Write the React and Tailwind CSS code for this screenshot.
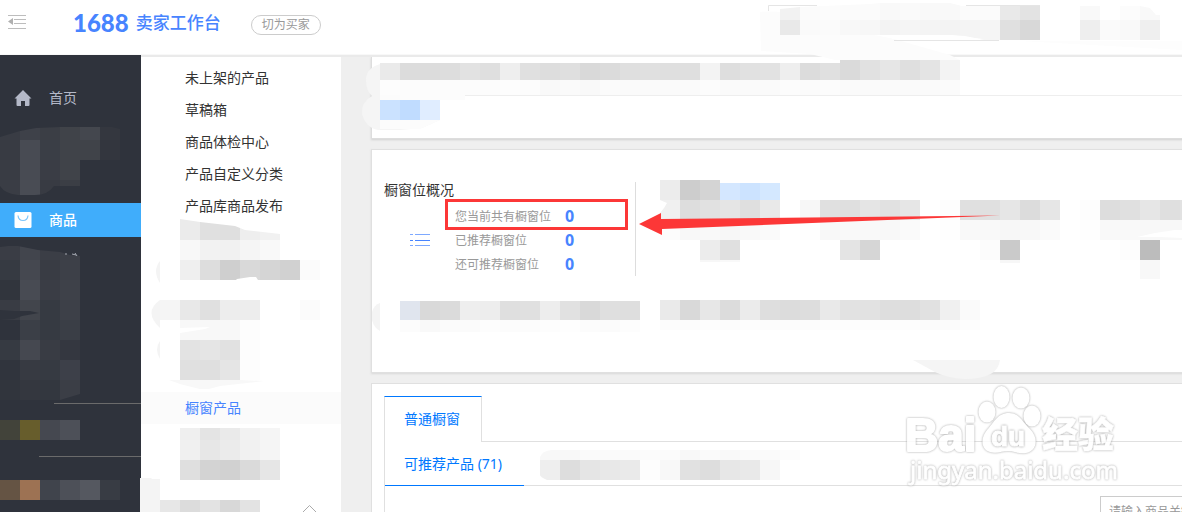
import React from "react";

const subNav = ["未上架的产品", "草稿箱", "商品体检中心", "产品自定义分类", "产品库商品发布"];

const stats = [
  ["您当前共有橱窗位", 0],
  ["已推荐橱窗位", 0],
  ["还可推荐橱窗位", 0],
];

// Each strip: x, y, height, then the colour of every 20px block.
const darkTop = [
  [0, 120, 20, "393c44 3e4149 3b3e45 404349 44474e 34373f"],
  [0, 140, 20, "383b43 484b53 3a3e46 404349 404349 33363e"],
  [0, 160, 20, "393c44 484b53 3a3d45 404349"],
  [0, 180, 20, "3a3d45 494c54 383b43 3b3e45"],
];
const darkMid = [
  [0, 240, 20, "3a3d45 42454d 3b3e46 3c3f47"],
  [0, 260, 20, "363a42 454850 393c44 3d4048"],
  [0, 280, 20, "31353d 484b53 3a3d45 3e4149"],
  [0, 300, 20, "393c44 42454c 363a42 3d4048"],
  [0, 320, 20, "2f333c 3b3f47 363a42 3a3e46"],
  [0, 340, 20, "363a42 454850 393c44 343740"],
  [0, 360, 20, "30343d 373a42 363a42 3d4049"],
  [0, 380, 20, "31353d 34373f 33373f 3b3e46"],
];
const darkLow = [
  [0, 420, 20, "42433a 675d2c 454850 4d5058"],
  [0, 480, 20, "655444 9d7253 40444c 4d5058 555860 383c44"],
];
const navTop = [
  [180, 218, 22, "ebebeb e0e0e0 dfdfdf eeeeee f1f1f1"],
  [180, 240, 20, "f8f8f8 f2f2f2 f1f1f1 f5f5f5 f9f9f9"],
];
const navBlocks = [
  [180, 260, 20, "efefef dddddd cfcfcf d9d9d9 d5d5d5 d1d1d1 fbfbfb"],
  [160, 300, 20, "f5f5f5 e8e8e8 e0e0e0 ededed ededed"],
  [300, 300, 20, "fbfbfb"],
  [180, 320, 20, "f8f8f8 f8f8f8 f8f8f8 fdfdfd"],
  [180, 340, 20, "e3e3e3 e5e5e5 e1e1e1 fdfdfd"],
  [180, 360, 20, "e0e0e0 dfdfdf e5e5e5 fdfdfd"],
  [180, 428, 12, "efefef e4e4e4 eaeaea f2f2f2 f5f5f5"],
  [180, 440, 20, "f0f0f0 e7e7e7 ebebeb f1f1f1 f5f5f5"],
  [180, 460, 20, "dfdfdf d3d3d3 d1d1d1 dadada e6e6e6"],
  [160, 500, 12, "e7e7e7 dcdcdc e3e3e3 d8d8d8 e3e3e3"],
];
const mainBlocks = [
  [380, 63, 17, "eaeaea dcdcdc dcdcdc dddddd e2e2e2 dfdfdf eeeeee e0e0e0 dddddd dfdfdf d9d9d9 dbdbdb dfdfdf e0e0e0 dfdfdf dfdfdf f3f3f3 dedede e1e1e1 e2e2e2 eeeeee dcdcdc e0e0e0"],
  [840, 60, 20, "dadada e1e1e1 e6e6e6 dfdfdf e4e4e4 f3f3f3"],
  [380, 80, 15, "fdfdfd fcfcfc fcfcfc fcfcfc fcfcfc fcfcfc fdfdfd fcfcfc f9f9f9 fafafa f9f9f9 fbfbfb fafafa fafafa fafafa fafafa fcfcfc fafafa fafafa fafafa fcfcfc fbfbfb fcfcfc fafafa fafafa fafafa fafafa fafafa fbfbfb"],
  [380, 100, 20, "cbe2ff c0dcff e0edff"],
  [660, 180, 20, "ececec cdcdcd d4d4d4"],
  [720, 183, 17, "d4e7ff cce3ff d4e8ff"],
  [660, 200, 20, "f0f0f0 dddddd e1e1e1 e5e5e5 dfdfdf e9e9e9"],
  [800, 200, 20, "f7f7f7 e0e0e0 dfdfdf e5e5e5 e1e1e1 e6e6e6"],
  [940, 200, 20, "fdfdfd e0e0e0 e0e0e0 e6e6e6 dcdcdc e6e6e6"],
  [1080, 200, 20, "fdfdfd dddddd e0e0e0 e6e6e6 dfdfdf e2e2e2"],
  [660, 220, 20, "fcfcfc f8f8f8 f9f9f9 f7f7f7 f9f9f9 fafafa"],
  [800, 220, 20, "fefefe f8f8f8 f9f9f9 f9f9f9 f8f8f8 fafafa"],
  [940, 220, 20, "fefefe f9f9f9 f9f9f9 f7f7f7 f8f8f8 fafafa"],
  [1080, 220, 20, "fefefe f9f9f9 f9f9f9 f8f8f8 f8f8f8 f8f8f8"],
  [700, 240, 20, "ececec e0e0e0"],
  [840, 240, 20, "e4e4e4 d6d6d6"],
  [980, 240, 20, "fcfcfc cacaca"],
  [1120, 240, 20, "fdfdfd bcbcbc"],
  [1140, 260, 19, "f8f8f8"],
  [700, 260, 2, "f7f7f7 f9f9f9"],
  [1000, 260, 3, "f7f7f7"],
  [400, 301, 19, "e0e5ee d9d9d9 dbdbdb eeeeee ededed dfdfdf e0e0e0 ededed e1e1e1 d9d9d9 dfdfdf dedede"],
  [400, 320, 12, "fcfcfc f9f9f9 fbfbfb fbfbfb fdfdfd fcfcfc fcfcfc fdfdfd fefefe fcfcfc fbfbfb fdfdfd"],
  [660, 300, 20, "eaeaea d9d9d9 e7e7e7 dcdcdc ebebeb dedede dcdcdc dddddd e9e9e9 e2e2e2 e2e2e2 dedede dddddd e1e1e1 f0f0f0 fafafa"],
  [660, 320, 10, "fcfcfc fcfcfc fdfdfd fcfcfc fdfdfd fcfcfc fcfcfc fcfcfc fdfdfd fdfdfd fdfdfd fdfdfd fdfdfd fbfbfb fbfbfb fdfdfd"],
];
const tabBlocks = [
  [540, 450, 10, "f8f8f8 f8f8f8 fafafa fafafa fafafa fbfbfb fbfbfb f8f8f8 fafafa f9f9f9 fafafa fafafa fcfcfc"],
  [540, 460, 20, "eeeeee dddddd e5e5e5 e8e8e8 eaeaea fdfdfd f8f8f8 e1e1e1 dddddd e7e7e7 e9e9e9 f7f7f7"],
];
const headBlocks = [
  [780, 3, 17, "f2f2f2 fbfbfb fcfcfc fbfbfb fbfbfb f9f9f9 fafafa f9f9f9 f9f9f9 fbfbfb fbfbfb e9e9e9 e3e3e3"],
  [780, 20, 20, "e9e9e9 fafafa fbfbfb f8f8f8 f7f7f7 f3f3f3 f5f5f5 f4f4f4 f3f3f3 f4f4f4 f5f5f5 e0e0e0 d8d8d8"],
  [1080, 6, 14, "f9f9f9 ffffff fcfcfc f9f9f9"],
  [1080, 20, 20, "eeeeee fafafa f9f9f9 efefef"],
];

function Blocks({ rows, clip }) {
  return (
    <g clipPath={clip} shapeRendering="crispEdges">
      {rows.map(([x, y, h, colors]) =>
        colors.split(" ").map((c, i) => (
          <rect key={`${x}-${y}-${i}`} x={x + i * 20} y={y} width="20" height={h} fill={`#${c}`} />
        ))
      )}
    </g>
  );
}

function Mosaic() {
  return (
    <svg className="pointer-events-none absolute left-0 top-0 z-20" width="1182" height="512" viewBox="0 0 1182 512" aria-hidden="true">
      <defs>
        <clipPath id="a"><path d="M0 137L20 131L36 128L60 127H112L120 129V160H80V186H54Q48 195 35 195H18Q5 194 0 186Z" /></clipPath>
        <clipPath id="b"><path d="M0 247L8 246H18L38 250L60 252L70 255L80 256V394L60 400H0Z" /></clipPath>
        <clipPath id="c"><path d="M180 219L200 222L235 226L245 230L280 234V260H180Z" /></clipPath>
        <clipPath id="d"><path d="M780 9L800 7L870 4L880 3H950L962 6H1140L1150 8L1156 15H1160V40H984L965 36L950 35H780Z" /></clipPath>
        <clipPath id="e"><path d="M552 450H800V480H547Q540 477 540 475V457Q542 451 552 450Z" /></clipPath>
      </defs>

      <Blocks rows={darkTop} clip="url(#a)" />
      <Blocks rows={darkMid} clip="url(#b)" />
      <Blocks rows={darkLow} />
      <path d="M14 311L30 311L39 313L22 316L14 319L0 320V310Z" fill="#2f333c" />
      <path d="M65 254h2M72 254l4 1M75 253l2 3" stroke="#a4a8b0" />
      <path d="M54 403.500H141M39 456.500H141" stroke="#6b6b6b" />

      <Blocks rows={navTop} clip="url(#c)" />
      <Blocks rows={navBlocks} />
      <path d="M236 280L237 279L250 277H256L258 280Z" fill="#fff" />
      <path d="M180 333V328L210 327L205 329Z" fill="#fff" />
      <path d="M180 380H240L264 381L220 386L209 389H200L180 384L169 380Z" fill="#f8f8f8" />
      <path d="M160 261Q152 271 160 283ZM160 300Q143 312 160 328ZM160 341Q154 349 160 359ZM140 478H151L152 479H160V512H140Z" fill="#f4f4f4" />
      <path d="M302 513L309.500 505.500L317 513" fill="none" stroke="#aaa" />

      <path d="M380 64Q366 68 366 80Q366 91 372 96Q361 102 362 114Q366 128 378 130H400L422 128L440 120V100H465V80H380Z" fill="#f5f5f5" />
      <path d="M380 80H465V100H440V120L420 129H380Z" fill="#fcfcfc" />
      <Blocks rows={mainBlocks} />
      <path d="M372 312Q374 305 380 303V331Q374 328 372 320Z" fill="#f4f4f4" />
      <path d="M660 200L667 203L664 208L660 213Z" fill="#fff" />
      <path d="M1137 237L1155 233L1175 230H1182V238L1160 237Z" fill="#fff" />
      <path d="M913 360H1000Q998 379 965 379Q947 378 935 372Z" fill="#f5f5f5" />

      <path d="M760 12Q790 8 880 35L950 55L960 60H848L835 60L810 54L761 51Z" fill="#fcfcfc" />
      <path d="M1020 41H1182V50L1110 46Z" fill="#fdfdfd" />
      <path d="M768.500 11V5.500H817M966 5.500H1040M894 40.500H999" fill="none" stroke="#e5e5e5" />
      <Blocks rows={headBlocks} clip="url(#d)" />
      <path d="M874 35H950L983 39H895Z" fill="#fff" />
      <Blocks rows={tabBlocks} clip="url(#e)" />
    </svg>
  );
}

function Annotation() {
  return (
    <svg className="pointer-events-none absolute left-0 top-0 z-30" width="1182" height="512" viewBox="0 0 1182 512" aria-hidden="true">
      <rect x="446.500" y="200.500" width="180" height="28" fill="none" stroke="#fc3737" strokeWidth="3" />
      <path d="M639 224L661 213V219L1000 215.500L662 229V235Z" fill="#fc3737" />
    </svg>
  );
}

function Watermark() {
  return (
    <svg className="pointer-events-none absolute left-0 top-0 z-30 opacity-85" width="1182" height="512" viewBox="0 0 1182 512" role="img" aria-label="Baidu 经验 jingyan.baidu.com">
      <g className="[filter:drop-shadow(0_0_1px_#999)]" fill="#fff" stroke="#fff" strokeWidth="2" strokeLinejoin="round">
        <text x="905" y="451" fontFamily="Liberation Sans, Arial, sans-serif" fontWeight="700" fontSize="46">Bai</text>
        <text x="1042" y="448" fontFamily="Noto Sans CJK SC, sans-serif" fontWeight="900" fontSize="36" strokeWidth="0.5">经验</text>
        <text x="910" y="479" fontFamily="Noto Sans, sans-serif" fontSize="24" strokeWidth="0.8">jingyan.baidu.com</text>
      </g>
      <g className="[filter:drop-shadow(0_0_1px_#999)]" fill="#fff">
        <ellipse cx="987" cy="412" rx="8.500" ry="10.500" />
        <ellipse cx="1001.500" cy="397" rx="8" ry="11" />
        <ellipse cx="1021" cy="398" rx="8.500" ry="10.500" />
        <ellipse cx="1032" cy="416" rx="8.500" ry="10.500" />
        <path d="M1009 413C1020 413 1022 422 1030 429C1039 438 1037 451 1026 453C1018 454 1014 451 1008 451C1002 451 997 454 990 452C980 449 981 437 987 430C994 423 997 413 1009 413Z" />
      </g>
      <text className="[filter:drop-shadow(0_0_1px_#888)]" x="991" y="446" fill="#fff" stroke="#fff" fontFamily="Liberation Sans, Arial, sans-serif" fontWeight="700" fontSize="28">du</text>
    </svg>
  );
}

function Header() {
  return (
    <header className="relative flex h-[55px] shrink-0 items-start border-b border-[#f8f8f8] bg-white">
      <button type="button" aria-label="收起菜单" className="ml-2 mt-[14px] h-4 w-[18px]">
        <svg width="18" height="16" viewBox="0 0 18 16" fill="none" stroke="#bdbdbd">
          <path d="M0 1.500H18M6 5.500H18M6 9.500H18M0 14.500H18" />
          <path d="M0 7.500L5 4V11Z" fill="#b0b0b0" stroke="none" />
        </svg>
      </button>
      <a href="#" className="ml-[47px] mt-[7px] flex h-8 items-center gap-[7px] text-[#4784ff]">
        <span className="font-[Lato,sans-serif] text-2xl font-black">1688</span>
        <span className="text-[17px] font-medium">卖家工作台</span>
      </a>
      <button type="button" className="ml-[30px] mt-[15px] h-5 w-[70px] rounded-full border border-[#ccc] text-xs leading-[18px] text-[#999]">
        切为买家
      </button>
    </header>
  );
}

function Sidebar() {
  return (
    <nav className="w-[141px] shrink-0 bg-[#2f333c] pt-[26px] text-sm">
      <a href="#" className="flex h-[34px] items-center gap-[17px] pl-[14px] text-[#b4b9c8]">
        <svg width="18" height="18" viewBox="0 0 18 18" fill="currentColor">
          <path d="M9 1L17.500 9.500H15.500V16Q15.500 17 14.500 17H11V12H7V17H3.500Q2.500 17 2.500 16V9.500H.5Z" />
        </svg>
        首页
      </a>
      <a href="#" className="mt-[88px] flex h-[34px] items-center gap-[17px] bg-[#40adfb] pl-[14px] font-medium text-white">
        <svg width="18" height="16" viewBox="0 0 18 16">
          <rect x="0.500" width="17" height="16" rx="1.500" fill="#fff" />
          <path d="M4 3.500Q4.500 8.500 9 8.500T14 3.500" fill="none" stroke="#7cc5fb" strokeWidth="1.200" />
        </svg>
        商品
      </a>
    </nav>
  );
}

export default function App() {
  return (
    <div className="relative flex h-screen flex-col overflow-hidden bg-[#efefef] font-['Noto_Sans','Noto_Sans_CJK_SC',sans-serif] text-[#333]">
      <Header />
      <div className="flex min-h-0 flex-1">
        <Sidebar />
        <nav className="w-[200px] shrink-0 overflow-hidden border-t-2 border-[#eaeaea] bg-white pt-[5px] text-sm leading-8">
          {subNav.map((label) => (
            <a key={label} href="#" className="block h-8 pl-11">{label}</a>
          ))}
          <a href="#" className="mt-[170px] block h-8 bg-[#fbfbfb] pl-11 text-[#4784ff]">橱窗产品</a>
        </nav>
        <main className="min-w-0 flex-1 overflow-hidden border-t-2 border-[#eaeaea] pl-[30px]">
          <div className="flex min-w-[970px] flex-col gap-[10px]">
            <section className="border-x border-b border-[#ddd] bg-white pb-[42px] shadow-[0_1px_2px_#d0d0d0]">
              <div className="h-[39px] border-b border-[#eee]" />
            </section>

            <section className="border border-[#e0e0e0] bg-white px-3 pb-24 pt-8 shadow-[0_1px_2px_#d8d8d8]">
              <div className="w-[252px] border-r border-[#ddd]">
                <h2 className="text-sm leading-4">橱窗位概况</h2>
                <div className="flex items-center pt-[6px]">
                  <svg className="ml-[25px]" width="21" height="14" viewBox="0 0 21 14" fill="none" stroke="#4784ff" strokeDasharray="3 2 15">
                    <path d="M1 1.500H21M1 12.500H21" opacity="0.700" />
                    <path d="M1 7.500H21" />
                  </svg>
                  <dl className="pl-[25px]">
                    {stats.map(([label, value]) => (
                      <div key={label} className="flex h-6 items-center">
                        <dt className="w-[110px] pt-px text-xs text-[#999]">{label}</dt>
                        <dd className="text-base font-bold leading-6 text-[#4784ff]">{value}</dd>
                      </div>
                    ))}
                  </dl>
                </div>
              </div>
            </section>

            <section className="border border-[#e0e0e0] bg-white px-3 pt-3 text-sm">
              <div className="flex border-b border-[#e0e0e0]">
                <button type="button" className="-mb-px h-[46px] w-[98px] border-x border-t border-x-[#e0e0e0] border-t-[#0078ff] bg-white pb-0.5 pl-[19px] text-left text-[#0078ff]">
                  普通橱窗
                </button>
              </div>
              <div className="border-x border-[#e0e0e0]">
                <div className="flex border-b border-[#e0e0e0]">
                  <button type="button" className="-mb-px h-11 w-[139px] border-b border-[#0078ff] pl-[19px] text-left text-[#0078ff]">
                    可推荐产品 (71)
                  </button>
                </div>
                <div className="flex justify-end pr-[27px] pt-[10px]">
                  <input aria-label="搜索商品" placeholder="请输入商品关键词" className="h-[30px] w-[200px] border border-[#ccc] px-2 text-xs placeholder:text-[#999]" />
                </div>
              </div>
            </section>
          </div>
        </main>
      </div>
      <Mosaic />
      <Annotation />
      <Watermark />
    </div>
  );
}
